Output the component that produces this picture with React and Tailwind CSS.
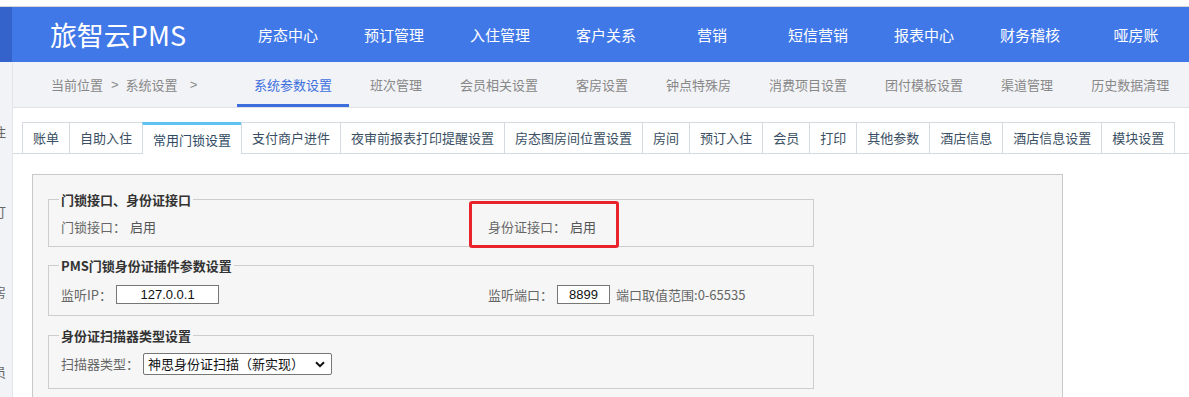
import React from "react";

const navItems = ["房态中心", "预订管理", "入住管理", "客户关系", "营销", "短信营销", "报表中心", "财务稽核", "哑房账"];
const subItems = ["系统参数设置", "班次管理", "会员相关设置", "客房设置", "钟点特殊房", "消费项目设置", "团付模板设置", "渠道管理", "历史数据清理"];
const tabs = ["账单", "自助入住", "常用门锁设置", "支付商户进件", "夜审前报表打印提醒设置", "房态图房间位置设置", "房间", "预订入住", "会员", "打印", "其他参数", "酒店信息", "酒店信息设置", "模块设置"];
const sideChars = ["住", "订", "房", "员"];

function Fieldset({ title, children, className = "" }) {
  return (
    <fieldset className={`w-[766px] border border-[#cdcdcd] pl-[10px] pr-[10px] ${className}`}>
      <legend className="px-[2px] text-[13px] leading-[17px] font-bold text-[#333]">{title}</legend>
      {children}
    </fieldset>
  );
}

export default function App() {
  return (
    <div className="w-[1189px] h-[397px] overflow-hidden bg-white font-['Noto_Sans_CJK_SC','Noto_Sans',sans-serif]">
      <div className="h-[7px] bg-white border-b border-[#d6d6d6]" />
      <header className="flex h-[55px] bg-[#4078e8]">
        <div className="w-[12px] bg-[#3563cc]" />
        <div className="w-[225px] pl-[38px] flex items-center text-[27px] leading-none text-white whitespace-nowrap">旅智云PMS</div>
        <nav className="flex">
          {navItems.map((n) => (
            <div key={n} className="w-[106px] shrink-0 flex items-center justify-center pt-[1px] text-[15px] text-white whitespace-nowrap">{n}</div>
          ))}
        </nav>
      </header>
      <div className="flex">
        <aside className="w-[13px] h-[335px] shrink-0 bg-[#f2f3f7] border-r border-[#e2e4e9] overflow-hidden pt-[60px]">
          {sideChars.map((c) => (
            <div key={c} className="h-[80px] ml-[-7px] text-[13px] leading-[20px] text-[#666]">{c}</div>
          ))}
        </aside>
        <main className="flex-1 min-w-0">
          <div className="h-[46px] bg-[#f2f3f7] border-b border-[#e0e2e6] flex">
            <div className="w-[224px] shrink-0 pl-[38px] flex items-center text-[13px] text-[#888] whitespace-nowrap">
              <span>当前位置</span>
              <span className="ml-[8px] font-['Liberation_Sans']">&gt;</span>
              <span className="ml-[7px]">系统设置</span>
              <span className="ml-[12px] font-['Liberation_Sans']">&gt;</span>
            </div>
            <div className="flex gap-[4px] shrink-0">
              {subItems.map((s, i) => (
                <div
                  key={s}
                  className={`shrink-0 whitespace-nowrap px-[17px] pt-[3px] flex items-center text-[13px] border-b-[3px] ${i === 0 ? "border-[#3d6fdc] text-[#3d6fdc]" : "border-transparent text-[#888]"}`}
                >
                  {s}
                </div>
              ))}
            </div>
          </div>

          <div className="pt-[14px]">
            <div className="flex pl-[9px] border-b border-[#d5dbe0]">
              {tabs.map((t, i) => {
                const active = i === 2;
                return (
                  <div
                    key={t}
                    className={`shrink-0 whitespace-nowrap px-[10px] flex items-center text-[13px] border-l border-[#d5dbe0] ${i === tabs.length - 1 ? "border-r" : ""} ${active ? "h-[32px] -mb-px bg-white border-t-[3px] border-t-[#5ec3f2] pt-[1px] text-[#2f4a63]" : "h-[31px] border-t text-[#3a4f63]"}`}
                  >
                    {t}
                  </div>
                );
              })}
            </div>

            <div className="ml-[19px] mt-[20px] w-[1031px] h-[240px] bg-[#f6f6f6] border border-[#c9c9c9] pl-[15px] pt-[16px]">
              <Fieldset title="门锁接口、身份证接口" className="pb-[9px]">
                <div className="grid grid-cols-[427px_1fr] pt-[9px] pl-[2px] text-[13px] leading-[20px] h-[29px]">
                  <div className="text-[#666]">门锁接口：<span className="ml-[4px] text-[#555]">启用</span></div>
                  <div className="relative text-[#666]">
                    身份证接口：<span className="ml-[4px] text-[#555]">启用</span>
                    <div className="absolute left-[-19px] top-[-16px] w-[150px] h-[47px] border-[3px] border-[#e8232b] rounded-[3px]" />
                  </div>
                </div>
              </Fieldset>

              <Fieldset title="PMS门锁身份证插件参数设置" className="mt-[10px] pb-[11px]">
                <div className="grid grid-cols-[427px_1fr] pt-[11px] pl-[2px] text-[13px] leading-[19px] text-[#666]">
                  <div className="flex items-center">
                    <span>监听IP：</span>
                    <div className="ml-[4px] w-[103px] h-[19px] border border-[#767676] bg-white text-center text-[#111] leading-[17px] font-['Liberation_Sans']">127.0.0.1</div>
                  </div>
                  <div className="flex items-center">
                    <span>监听端口：</span>
                    <div className="ml-[4px] w-[53px] h-[19px] border border-[#767676] bg-white text-center text-[#111] leading-[17px] font-['Liberation_Sans']">8899</div>
                    <span className="ml-[6px]">端口取值范围:0-65535</span>
                  </div>
                </div>
              </Fieldset>

              <Fieldset title="身份证扫描器类型设置" className="mt-[11px] pb-[13px]">
                <div className="flex items-center pt-[9px] pl-[2px] text-[13px] text-[#666]">
                  <span>扫描器类型：</span>
                  <div className="ml-[4px] relative w-[189px] h-[22px] border border-[#767676] rounded-[2px] bg-white flex items-center pl-[4px] text-[#111]">
                    <span>神思身份证扫描（新实现）</span>
                    <svg className="absolute right-[6px] top-[7px]" width="10" height="7" viewBox="0 0 10 7">
                      <path d="M1 1.2 L5 5.2 L9 1.2" fill="none" stroke="#111" strokeWidth="2" />
                    </svg>
                  </div>
                </div>
              </Fieldset>
            </div>
          </div>
        </main>
      </div>
    </div>
  );
}
